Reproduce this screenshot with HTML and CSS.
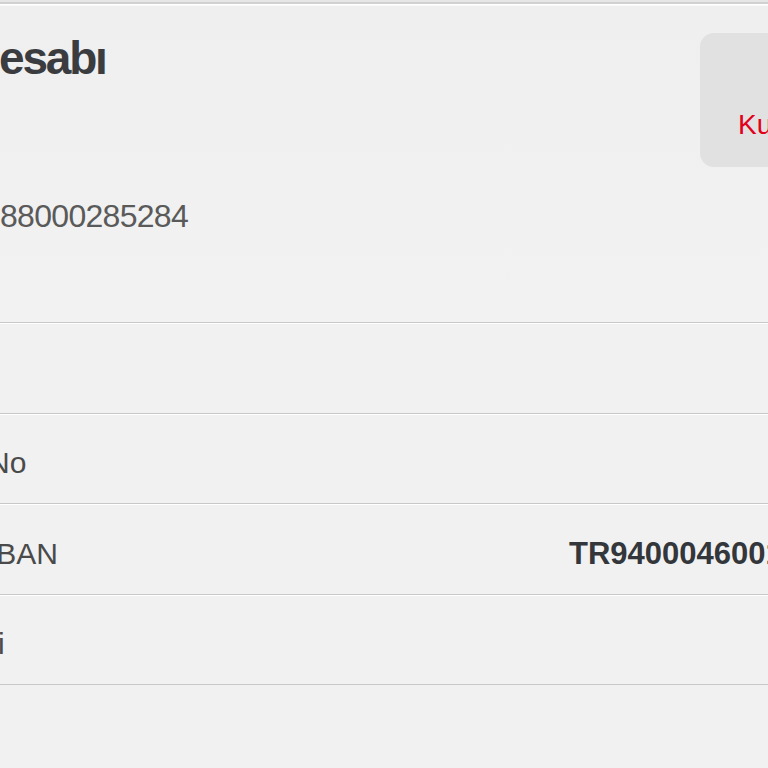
FILE: index.html
```html
<!DOCTYPE html>
<html lang="tr">
<head>
<meta charset="utf-8">
<title>Vadesiz Hesabı</title>
<link rel="stylesheet" href="styles.css">
</head>
<body>
<div class="topline"></div>
<main class="page">
  <section class="header">
    <div class="info">
      <h1 class="title">Hesabı</h1>
      <div class="acct-no">88000285284</div>
    </div>
    <a class="action" href="#">
      <span class="action-label">Kurumsal</span>
    </a>
  </section>
  <section class="rows">
    <div class="row"><span class="label"></span><span class="value"></span></div>
    <div class="row"><span class="label">No</span><span class="value"></span></div>
    <div class="row"><span class="label">IBAN</span><span class="value strong">TR940004600123456789012345</span></div>
    <div class="row"><span class="label">ri</span><span class="value"></span></div>
  </section>
</main>
</body>
</html>
```
FILE: styles.css
```css
html, body {
  margin: 0;
  padding: 0;
}
body {
  background: #f1f1f1;
  font-family: "Liberation Sans", Arial, sans-serif;
  overflow: hidden;
  width: 768px;
  height: 768px;
}
.topline {
  height: 2px;
  background: #e6e6e6;
}
.page {
  width: 1100px;
}
.header {
  display: flex;
  align-items: flex-start;
  height: 290px;
  padding-top: 28px;
  border-top: 2px solid #d0d0d0;
  border-bottom: 1px solid #c8c8c8;
  background: linear-gradient(#efefef, #f2f2f2);
  box-shadow: inset 0 1px 0 #ffffff, inset 0 2px 0 #f8f8f8;
}
.info {
  width: 700px;
  flex: none;
}
.title {
  margin: 0 0 0 -32px;
  font-size: 46px;
  line-height: 52px;
  font-weight: bold;
  letter-spacing: -2.2px;
  color: #3a3c3f;
}
.acct-no {
  margin-top: 114px;
  font-size: 32px;
  line-height: 36px;
  letter-spacing: -0.7px;
  color: #5a5a5a;
}
.action {
  display: block;
  flex: none;
  width: 180px;
  height: 134px;
  margin-top: 1px;
  box-sizing: border-box;
  padding: 77px 0 0 38px;
  background: #e1e1e1;
  border-radius: 14px;
  text-decoration: none;
}
.action-label {
  font-size: 28px;
  line-height: 30px;
  color: #e2001a;
}
.rows {
  margin-left: -12px;
}
.row {
  display: grid;
  grid-template-columns: 581px auto;
  align-items: center;
  height: 88.5px;
  box-sizing: content-box;
  border-top: 1px solid #ffffff;
  border-bottom: 1px solid #c8c8c8;
}
.label, .value {
  font-size: 30px;
  line-height: 34px;
  padding-top: 9px;
  white-space: nowrap;
}
.label {
  color: #4a4a4a;
}
.value.strong {
  font-size: 31px;
  font-weight: bold;
  color: #33363a;
  letter-spacing: 0;
}
```
